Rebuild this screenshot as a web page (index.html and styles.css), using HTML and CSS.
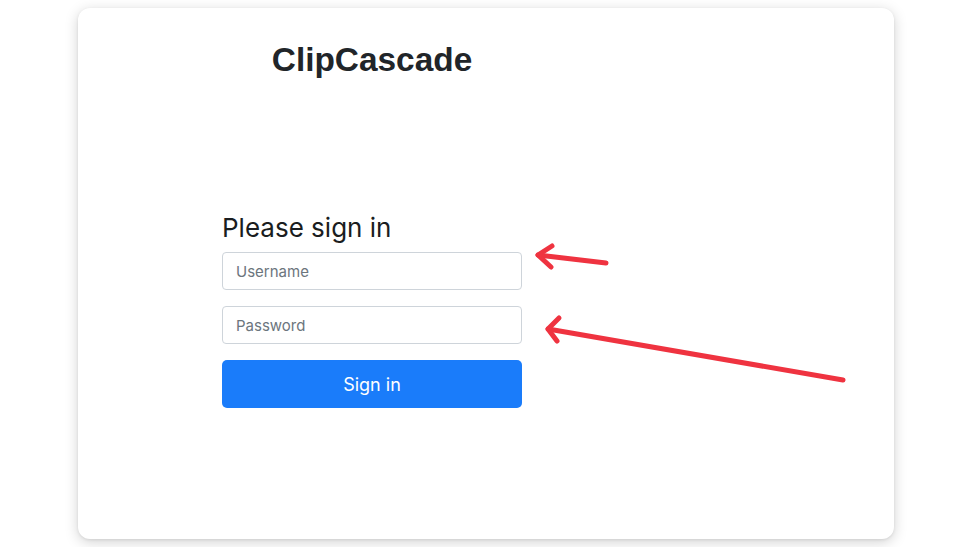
FILE: index.html
```html
<!DOCTYPE html>
<html lang="en">
<head>
<meta charset="utf-8">
<title>ClipCascade - Sign in</title>
<link rel="stylesheet" href="styles.css">
</head>
<body>
<div class="card">
  <div class="column">
    <h1 class="brand">ClipCascade</h1>
    <form class="signin">
      <h2 class="signin-title">Please sign in</h2>
      <input class="field" type="text" placeholder="Username">
      <input class="field" type="password" placeholder="Password">
      <button class="btn" type="button">Sign in</button>
    </form>
  </div>
</div>
<svg class="annotations" width="973" height="547" viewBox="0 0 973 547">
  <g fill="none" stroke="#ef3340" stroke-width="5" stroke-linecap="round" stroke-linejoin="round">
    <path d="M606 263 L538 255"/>
    <path d="M552 246 L538 255 L551 267"/>
    <path d="M843 380 L548 329"/>
    <path d="M559 318 L548 329 L557 341"/>
  </g>
</svg>
</body>
</html>
```

FILE: styles.css
```css
html, body {
  margin: 0;
  padding: 0;
  background: #ffffff;
}

body {
  position: relative;
  width: 973px;
  height: 547px;
  overflow: hidden;
  padding: 8px 79px 8px 78px;
  box-sizing: border-box;
  font-family: Inter, "Liberation Sans", sans-serif;
  color: #212529;
}

.card {
  height: 531px;
  box-sizing: border-box;
  background: #ffffff;
  border-radius: 12px;
  box-shadow: 0 3px 14px rgba(0, 0, 0, 0.18), 0 1px 3px rgba(0, 0, 0, 0.08);
  padding: 32px 0 0 144px;
}

.column {
  width: 300px;
  display: flex;
  flex-direction: column;
}

.brand {
  margin: 0;
  text-align: center;
  font-family: "Liberation Sans", Arial, sans-serif;
  font-weight: 700;
  font-size: 33.4px;
  line-height: 40px;
  color: #212529;
}

.signin {
  margin-top: 132px;
  display: flex;
  flex-direction: column;
}

.signin-title {
  margin: 0 0 9px;
  font-size: 26px;
  line-height: 31px;
  font-weight: 400;
  color: #1a1d20;
}

.field {
  box-sizing: border-box;
  height: 38px;
  width: 100%;
  margin: 0 0 16px;
  padding: 0 13px;
  border: 1px solid #ced4da;
  border-radius: 4px;
  font-family: Inter, "Liberation Sans", sans-serif;
  font-size: 15px;
  color: #212529;
  background: #fff;
}

.field::placeholder {
  color: #6c757d;
}

.btn {
  height: 48px;
  width: 100%;
  border: none;
  border-radius: 5px;
  background: #1a7cfa;
  color: #ffffff;
  font-family: Inter, "Liberation Sans", sans-serif;
  font-size: 18px;
  padding: 0;
  cursor: pointer;
}

.annotations {
  position: absolute;
  left: 0;
  top: 0;
  pointer-events: none;
}
```
